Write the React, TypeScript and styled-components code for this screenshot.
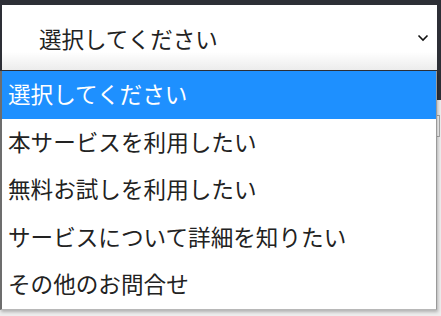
import React from 'react';
import styled, { createGlobalStyle } from 'styled-components';

const GlobalStyle = createGlobalStyle`
  html, body {
    margin: 0;
    padding: 0;
  }
  body {
    width: 441px;
    height: 316px;
    overflow: hidden;
    font-family: "Noto Sans CJK JP", "Noto Sans", sans-serif;
  }
`;

const Page = styled.div`
  position: relative;
  width: 441px;
  height: 316px;
  background: #ededed;
`;

const Header = styled.div`
  box-sizing: border-box;
  height: 100px;
  padding: 5px 4px 0 2px;
  background: #2d2f36;
`;

const SelectBox = styled.div`
  box-sizing: border-box;
  height: 65px;
  display: flex;
  align-items: center;
  justify-content: space-between;
  padding: 0 8px 0 37px;
  background: linear-gradient(to bottom, #ffffff 72%, #ececec 100%);
  color: #222;
  font-size: 22.5px;
`;

const Content = styled.div`
  padding: 15px 0 0 0;
`;

const Field = styled.div`
  box-sizing: border-box;
  height: 22px;
  margin-right: 1px;
  border: 1px solid #a8a8a8;
  background: #f7f7f7;
`;

const Dropdown = styled.ul`
  position: absolute;
  top: 71px;
  left: 0;
  box-sizing: border-box;
  width: 437px;
  margin: 0;
  padding: 0;
  list-style: none;
  background: #fff;
  border-left: 2px solid #6d6d6d;
  border-right: 1px solid #9a9a9a;
  border-bottom: 1px solid #b8b8b8;
  box-shadow: 1px 2px 3px rgba(0, 0, 0, 0.25);
`;

const Option = styled.li<{ $active?: boolean }>`
  box-sizing: border-box;
  height: 47.5px;
  display: flex;
  align-items: center;
  padding: 0 0 2px 6px;
  font-size: 22.6px;
  color: ${(p) => (p.$active ? '#fff' : '#222')};
  background: ${(p) => (p.$active ? '#1e90ff' : 'transparent')};
`;

const Chevron = () => (
  <svg width="12" height="8" viewBox="0 0 12 8">
    <path d="M1.5 1.5 L6 6 L10.5 1.5" fill="none" stroke="#111" strokeWidth="1.6" />
  </svg>
);

const options = [
  '選択してください',
  '本サービスを利用したい',
  '無料お試しを利用したい',
  'サービスについて詳細を知りたい',
  'その他のお問合せ',
];

export default function App() {
  return (
    <Page>
      <GlobalStyle />
      <Header>
        <SelectBox>
          <span>選択してください</span>
          <Chevron />
        </SelectBox>
      </Header>
      <Content>
        <Field />
      </Content>
      <Dropdown>
        {options.map((o, i) => (
          <Option key={o} $active={i === 0}>
            {o}
          </Option>
        ))}
      </Dropdown>
    </Page>
  );
}
